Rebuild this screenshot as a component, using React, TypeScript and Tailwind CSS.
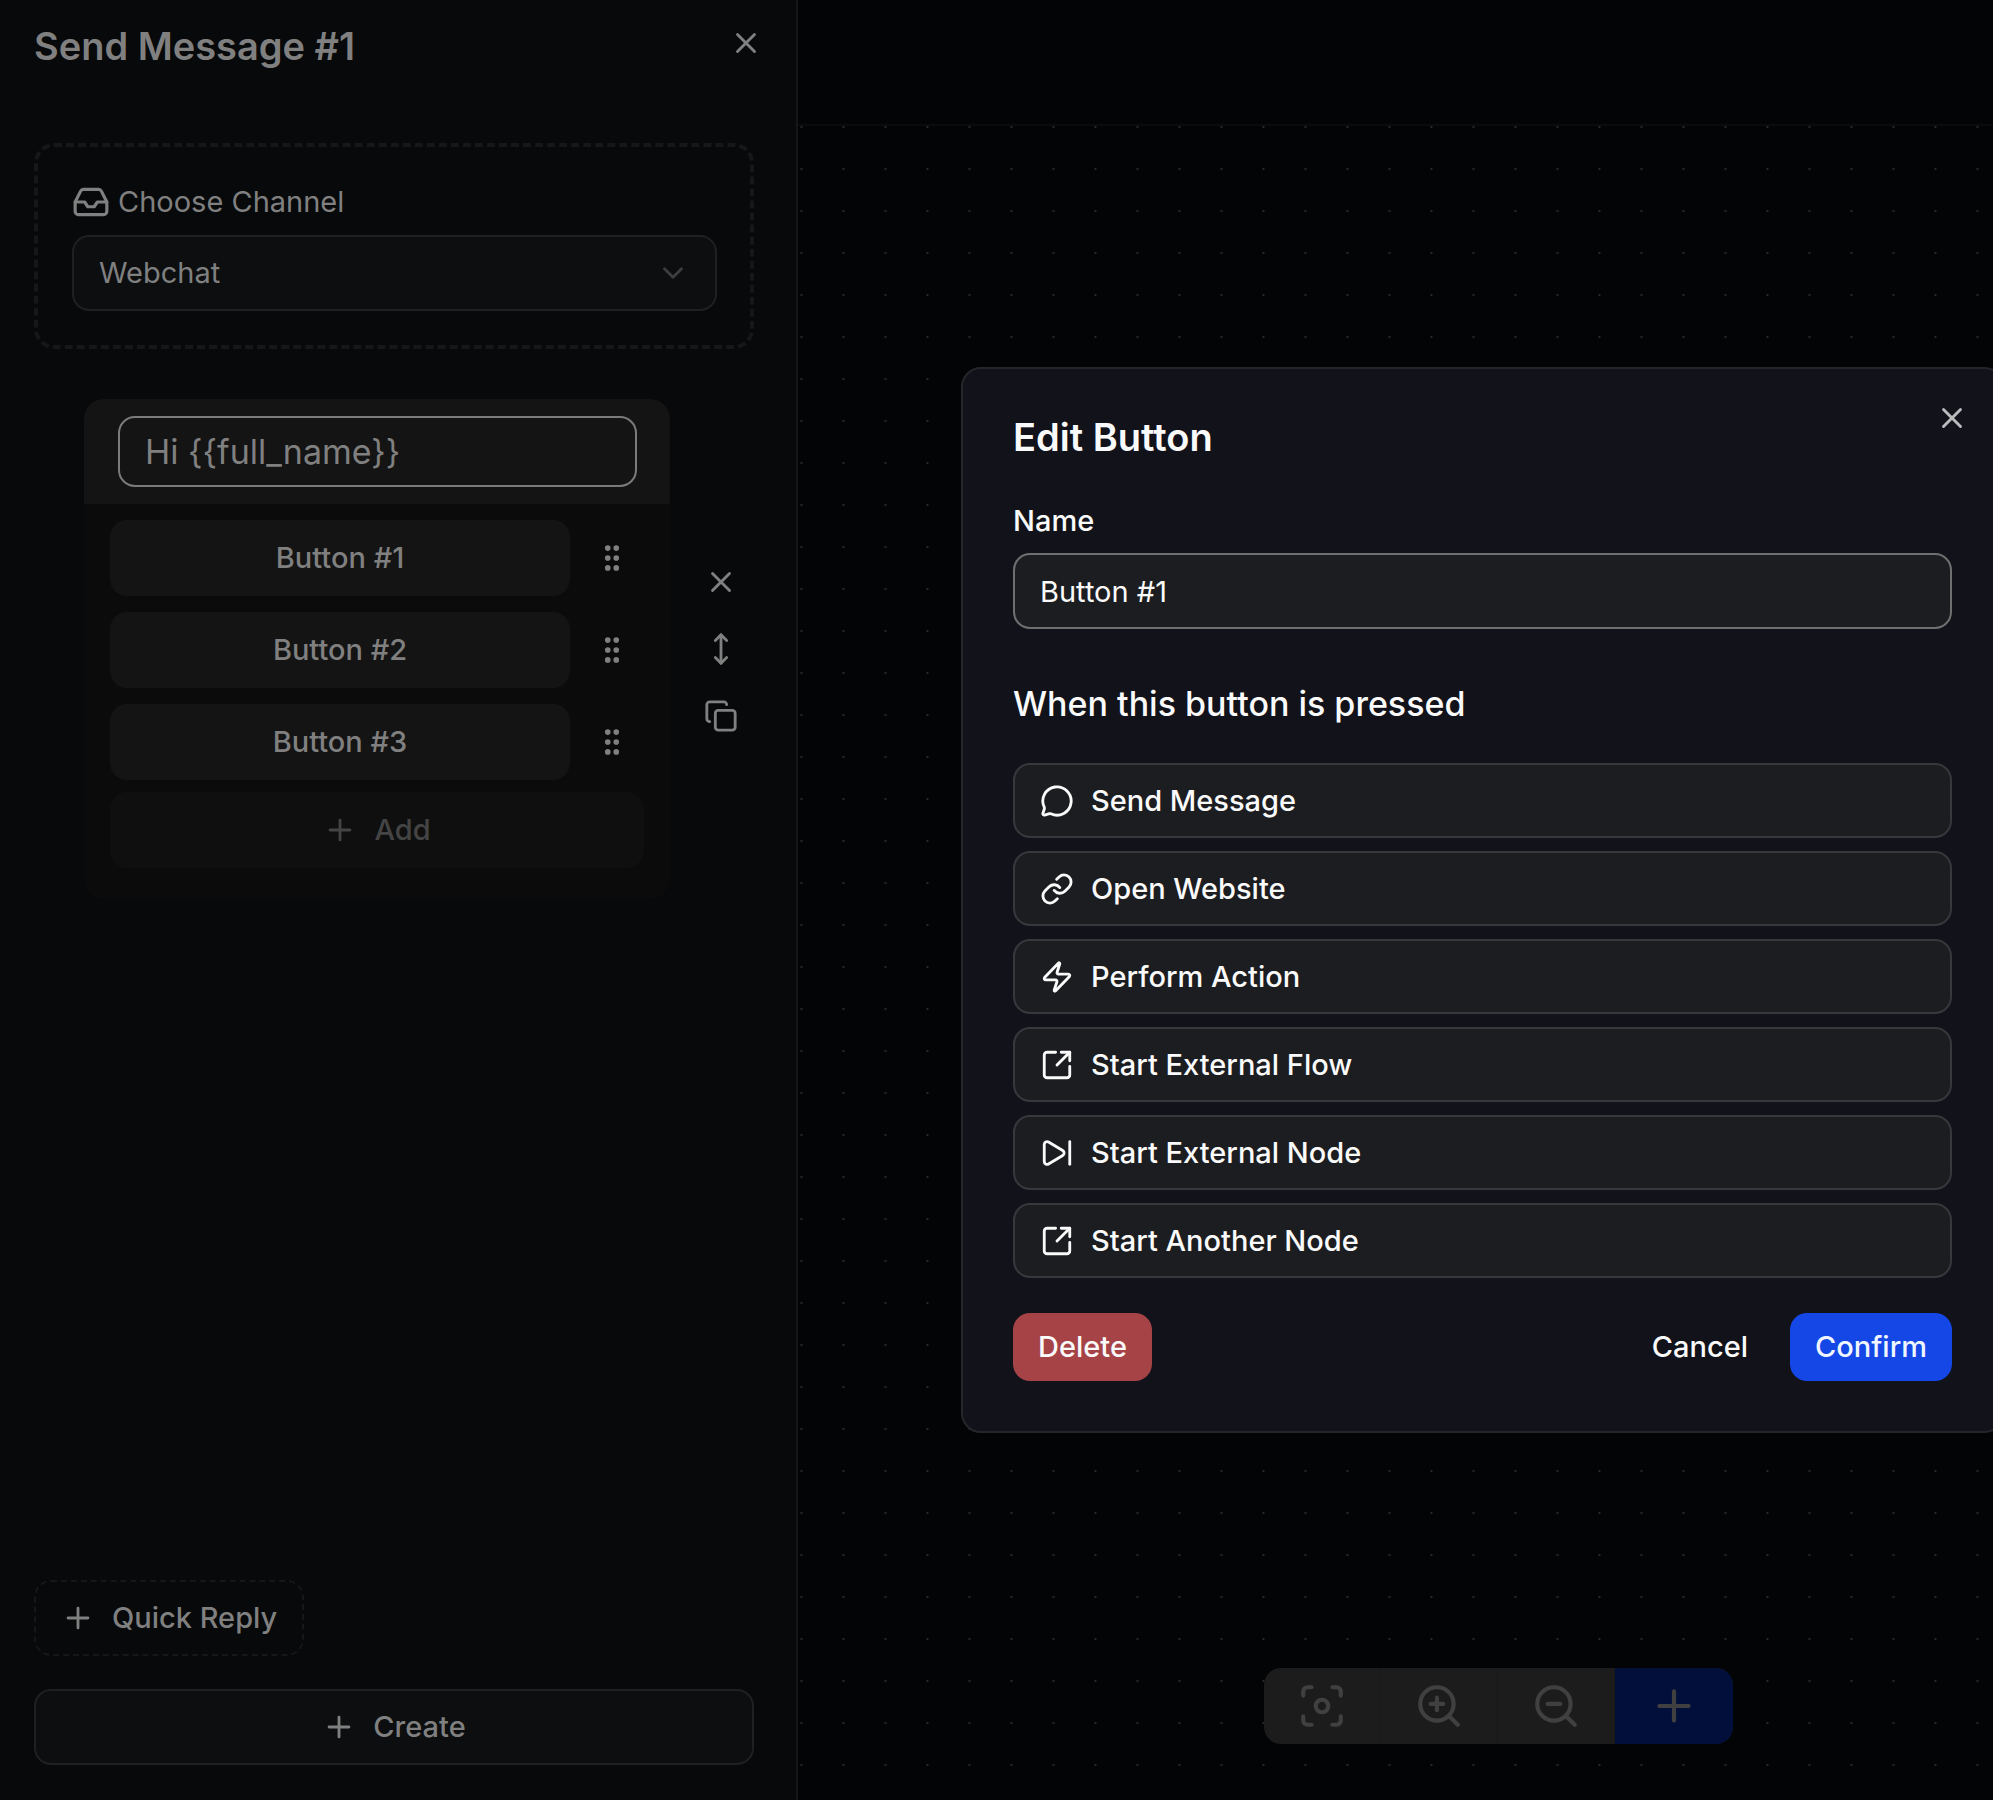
import {
  ChevronDown,
  Copy,
  Focus,
  GripVertical,
  Inbox,
  Link,
  MessageCircle,
  MoveVertical,
  Plus,
  SkipForward,
  SquareArrowOutUpRight,
  X,
  Zap,
  ZoomIn,
  ZoomOut,
} from "lucide-react";

const replyButtons = ["Button #1", "Button #2", "Button #3"];

const actions = [
  { label: "Send Message", icon: MessageCircle },
  { label: "Open Website", icon: Link },
  { label: "Perform Action", icon: Zap },
  { label: "Start External Flow", icon: SquareArrowOutUpRight },
  { label: "Start External Node", icon: SkipForward },
  { label: "Start Another Node", icon: SquareArrowOutUpRight },
];

const cardTools = [
  { label: "Remove block", icon: X },
  { label: "Move block", icon: MoveVertical },
  { label: "Duplicate block", icon: Copy },
];

const zoomTools = [
  { label: "Fit view", icon: Focus },
  { label: "Zoom in", icon: ZoomIn },
  { label: "Zoom out", icon: ZoomOut },
];

function ChannelPicker() {
  return (
    <div className="rounded-[20px] border-4 border-dashed border-[#151718] py-[34px] pl-[34px] pr-[33px]">
      <label className="flex h-[42px] items-center gap-2 text-[29px]" htmlFor="channel">
        <Inbox size={38} />
        Choose Channel
      </label>
      <div className="relative mt-3">
        <select
          className="h-[76px] w-full appearance-none rounded-[17px] border-2 border-[#1e2021] bg-[#0c0e0f] px-[25px] text-[29px]"
          id="channel"
        >
          <option>Webchat</option>
        </select>
        <ChevronDown
          className="pointer-events-none absolute right-[27px] top-[21px] text-[#3c3d3e]"
          size={34}
        />
      </div>
    </div>
  );
}

function MessageCard() {
  return (
    <div className="mt-[50px] flex items-center gap-[34px] pl-[50px] pr-4">
      <div className="flex-1 overflow-hidden rounded-[20px] bg-[#0b0b0b]">
        <div className="bg-[#141414] py-[17px] pl-[34px] pr-[33px]">
          <input
            aria-label="Message text"
            className="block h-[71px] w-full rounded-[17px] border-2 border-[#7b7b7b] bg-transparent px-[25px] text-[34px]"
            defaultValue="Hi {{full_name}}"
          />
        </div>
        <div className="px-[26px] pb-[31px] pt-4">
          <div className="grid gap-4">
            {replyButtons.map((label) => (
              <div className="flex items-center gap-[25px] pr-[15px]" key={label}>
                <button className="h-[76px] flex-1 rounded-[17px] bg-[#141414] text-[29px] font-medium">
                  {label}
                </button>
                <button aria-label={`Reorder ${label}`}>
                  <GripVertical size={34} />
                </button>
              </div>
            ))}
          </div>
          <button className="mt-3 flex h-[76px] w-full items-center justify-center gap-[17px] rounded-[17px] bg-[#0f0f0f] text-[29px] font-medium text-[#444444]">
            <Plus size={34} />
            Add
          </button>
        </div>
      </div>
      <div className="grid gap-[33px]">
        {cardTools.map(({ label, icon: Icon }) => (
          <button aria-label={label} key={label}>
            <Icon size={34} />
          </button>
        ))}
      </div>
    </div>
  );
}

function Sidebar() {
  return (
    <aside className="flex w-[798px] shrink-0 flex-col border-r-2 border-[#141617] bg-[#07090a] text-[#808080]">
      <header className="flex items-start justify-between pl-[34px] pr-[33px] pt-[26px]">
        <h1 className="text-[38px] font-semibold leading-[40px]">Send Message #1</h1>
        <button aria-label="Close panel">
          <X size={34} />
        </button>
      </header>
      <div className="flex flex-1 flex-col pb-[35px] pl-[34px] pr-[42px] pt-[77px]">
        <ChannelPicker />
        <MessageCard />
        <button className="mt-auto flex h-[76px] items-center gap-[17px] self-start rounded-[17px] border-2 border-dashed border-[#151718] px-[25px] text-[29px] font-medium">
          <Plus size={34} />
          Quick Reply
        </button>
        <button className="mt-[33px] flex h-[76px] items-center justify-center gap-[17px] rounded-[17px] border-2 border-[#1e2021] bg-[#0c0e0f] text-[29px] font-medium">
          <Plus size={34} />
          Create
        </button>
      </div>
    </aside>
  );
}

function Canvas() {
  return (
    <main className="flex min-w-0 flex-1 flex-col bg-[#030406]">
      <div className="h-[126px] border-b-2 border-[#0a0b0d]" />
      <div className="relative flex-1">
        <svg aria-hidden="true" className="absolute inset-0 h-full w-full">
          <pattern height="42" id="dots" patternUnits="userSpaceOnUse" width="42">
            <circle cx="3.5" cy="1" fill="#2a2b2e" r="1.1" />
          </pattern>
          <rect fill="url(#dots)" height="100%" width="100%" />
        </svg>
        <div className="absolute bottom-14 left-[466px] flex h-[76px] overflow-hidden rounded-[17px] bg-[#1c1c1c] text-[#404040]">
          {zoomTools.map(({ label, icon: Icon }) => (
            <button
              aria-label={label}
              className="grid w-[117px] place-items-center border-r border-[#181818]"
              key={label}
            >
              <Icon size={50} />
            </button>
          ))}
          <button aria-label="Add node" className="grid w-[118px] place-items-center bg-[#030f3b]">
            <Plus size={50} />
          </button>
        </div>
      </div>
    </main>
  );
}

function EditButtonDialog() {
  return (
    <div className="absolute inset-0 flex items-center justify-end overflow-hidden">
      <div
        aria-labelledby="dialog-title"
        className="relative -mr-[11px] w-[1043px] shrink-0 rounded-[20px] border-2 border-[#25262b] bg-[#11121a] p-[50px] text-[#fafafa]"
        role="dialog"
      >
        <button aria-label="Close" className="absolute right-[33px] top-8 text-[#bcbcbf]">
          <X size={34} />
        </button>
        <h2 className="text-[38px] font-semibold leading-[36px]" id="dialog-title">
          Edit Button
        </h2>
        <label className="mt-[51px] block text-[29px] font-medium leading-[30px]" htmlFor="name">
          Name
        </label>
        <input
          className="mt-[17px] block h-[76px] w-full rounded-[17px] border-2 border-[#6f6f70] bg-[#1c1d21] px-[25px] text-[29px]"
          defaultValue="Button #1"
          id="name"
        />
        <h3 className="mt-[50px] text-[34px] font-medium leading-[50px]">
          When this button is pressed
        </h3>
        <div className="mt-[34px] grid gap-[13px]">
          {actions.map(({ label, icon: Icon }) => (
            <button
              className="flex h-[75px] items-center gap-[17px] rounded-[17px] border-2 border-[#37383c] bg-[#1c1d21] px-[25px] text-[29px] font-medium"
              key={label}
            >
              <Icon size={34} />
              {label}
            </button>
          ))}
        </div>
        <div className="mt-[35px] flex h-[68px] gap-[17px] text-[29px] font-medium">
          <button className="mr-auto rounded-[17px] bg-[#a54347] px-[25px]">Delete</button>
          <button className="px-[25px]">Cancel</button>
          <button className="rounded-[17px] bg-[#1447e6] px-[25px] text-[#eff6ff]">Confirm</button>
        </div>
      </div>
    </div>
  );
}

export default function App() {
  return (
    <div className="relative flex min-h-screen overflow-hidden bg-[#030406] font-[Inter,sans-serif]">
      <Sidebar />
      <Canvas />
      <EditButtonDialog />
    </div>
  );
}
